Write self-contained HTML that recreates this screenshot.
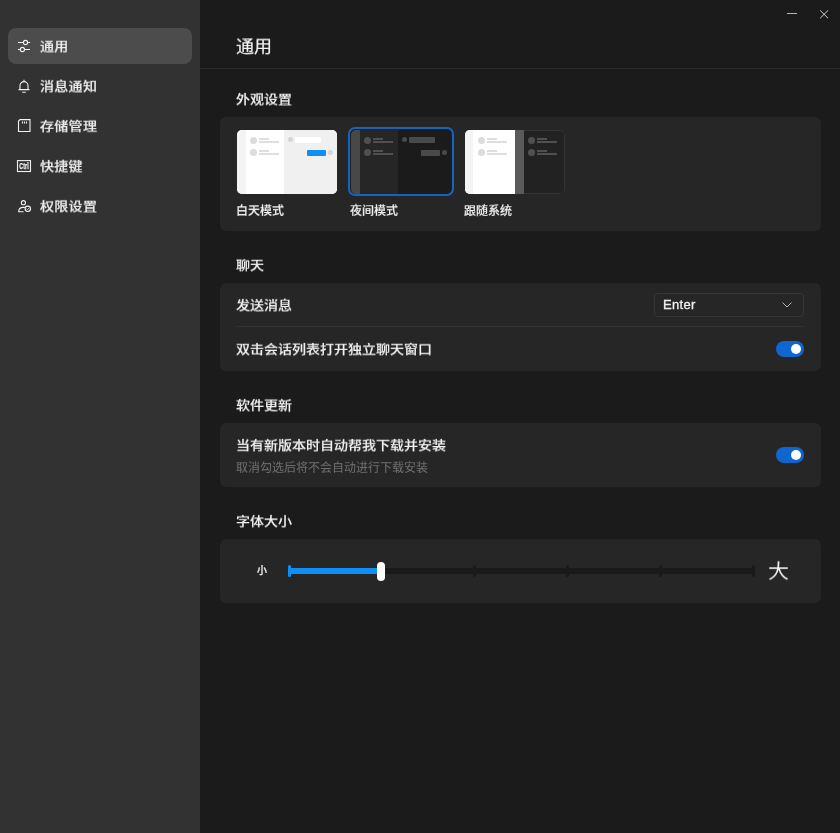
<!DOCTYPE html>
<html lang="zh-CN">
<head>
<meta charset="utf-8">
<title>设置</title>
<style>
*{box-sizing:border-box;margin:0;padding:0}
html,body{width:840px;height:833px;overflow:hidden;background:#1b1b1b}
body{font-family:"Liberation Sans","Noto Sans CJK SC",sans-serif;color:#f0f0f0;position:relative;font-size:14px}
.abs{position:absolute}
.nav .t,h1,.sec,.lbl,.row,.sub,.sel-box,.gt{will-change:transform}
.nav .t,h1,.sec,.lbl,.row,.sub{transform:scaleY(0.9);transform-origin:50% 55%}
.nav .t{display:inline-block;line-height:20px;vertical-align:middle;position:relative;top:-1px}
h1{transform:scaleY(0.96)}
.lbl{transform:scaleY(0.96)}
.sub{transform:scaleY(0.97);margin-top:0.500px}
#side{position:absolute;left:0;top:0;width:200px;height:833px;background:#323232}
.nav{position:absolute;left:8px;width:184px;height:36px;border-radius:8px;line-height:36px;padding-left:32px;font-size:14px;font-weight:500;color:#ececec;white-space:nowrap;-webkit-text-stroke:0.180px #ececec;letter-spacing:0.300px}
.nav.sel{background:#4c4c4c}
.nav svg{position:absolute;left:8px;top:10px;width:16px;height:16px;will-change:transform}
#main{position:absolute;left:200px;top:0;width:640px;height:833px;background:#1b1b1b}
h1{position:absolute;left:36px;top:32.600px;font-size:18px;font-weight:400;line-height:28px;color:#f2f2f2;-webkit-text-stroke:0.2px #f2f2f2}
.hr{position:absolute;left:0;top:68px;width:640px;height:1px;background:#282828}
.sec{position:absolute;left:36px;font-size:14px;line-height:20px;font-weight:500;-webkit-text-stroke:0.12px #f0f0f0;color:#f0f0f0;white-space:nowrap}
.card{position:absolute;left:20px;width:600.500px;background:#262626;border-radius:6px}
.lbl{position:absolute;font-size:12px;line-height:18px;font-weight:500;-webkit-text-stroke:0.12px #f0f0f0;color:#f0f0f0;white-space:nowrap}
.row{position:absolute;left:16px;font-size:14px;line-height:20px;font-weight:500;-webkit-text-stroke:0.12px #f0f0f0;color:#f0f0f0;white-space:nowrap}
.sub{position:absolute;left:16px;font-size:12px;line-height:18px;color:#727272;white-space:nowrap}
.tog{position:absolute;left:556px;width:28px;height:16px;border-radius:8px;background:#0f66d0}
.tog i{position:absolute;right:3px;top:3px;width:10px;height:10px;border-radius:5px;background:#fff}
.sel-box{position:absolute;left:434px;top:10px;width:150px;height:24px;border:1px solid #363636;border-radius:4px;font-size:13px;line-height:22px;padding-left:8px;color:#f0f0f0;-webkit-text-stroke:0.3px #f0f0f0;letter-spacing:0.3px}
.thumb{position:absolute;top:13px;width:100px;height:64px;border-radius:5px;overflow:hidden}
</style>
</head>
<body>
<div id="side">
  <div class="nav sel" style="top:28px">
    <svg viewBox="0 0 16 16" fill="none" stroke="#f2f2f2" stroke-width="1.1"><path d="M2 4.500h5.400M11.600 4.500H14M2 11.500h2.300M8.500 11.500H14"/><circle cx="9.500" cy="4.500" r="2.100"/><circle cx="6.400" cy="11.500" r="2.100"/></svg>
    <span class="t">通用</span></div>
  <div class="nav" style="top:68px">
    <svg viewBox="0 0 16 16" fill="none" stroke="#f2f2f2" stroke-width="1.1"><path d="M8 1.8v1.4M4 11.5V7.6a4 4 0 0 1 8 0v3.9M2.5 11.6h11M6.200 14.300h3.600"/></svg>
    <span class="t">消息通知</span></div>
  <div class="nav" style="top:108px">
    <svg viewBox="0 0 16 16" fill="none" stroke="#f2f2f2" stroke-width="1.1"><path d="M4 1.600H14v11.900H2.500V3.100z"/><path d="M6.500 3.500v2M8.500 3.500v2M10.500 3.500v2"/></svg>
    <span class="t">存储管理</span></div>
  <div class="nav" style="top:148px">
    <svg viewBox="0 0 16 16" fill="none" stroke="#f2f2f2" stroke-width="1.1"><rect x="1.500" y="2.600" width="13" height="10.900"/><text x="3.200" y="11.300" font-size="9" font-family="Liberation Sans,sans-serif" font-weight="700" textLength="9.800" lengthAdjust="spacingAndGlyphs" fill="#f2f2f2" stroke="#f2f2f2" stroke-width="0.250">Ctrl</text></svg>
    <span class="t">快捷键</span></div>
  <div class="nav" style="top:188px">
    <svg viewBox="0 0 16 16" fill="none" stroke="#f2f2f2" stroke-width="1.1"><circle cx="7.4" cy="4.7" r="2.05"/><path d="M7.6 13.7H2.700c0-2.600 1.800-4.300 4.500-4.300h1.600"/><circle cx="11.800" cy="10.800" r="2.700"/><path d="M10.600 10.800l.9.900 1.500-1.600" stroke-width="0.9"/></svg>
    <span class="t">权限设置</span></div>
</div>

<div id="main">
  <svg class="abs" style="left:586px;top:8px;width:12px;height:12px" viewBox="0 0 12 12" stroke="#b4b4b4" stroke-width="1"><path d="M1 5.500h10"/></svg>
  <svg class="abs" style="left:618px;top:8px;width:12px;height:12px" viewBox="0 0 12 12" stroke="#d0d0d0" stroke-width="1"><path d="M2.200 2.400l7.800 7.800M10 2.400l-7.800 7.800"/></svg>
  <h1>通用</h1>
  <div class="hr"></div>

  <div class="sec" style="top:89px">外观设置</div>
  <div class="card" style="top:117px;height:114px">
    <!-- light -->
    <div class="thumb" style="left:17px;background:#fff">
      <div class="abs" style="left:0;top:0;width:9px;height:64px;background:#f4f4f4"></div>
      <div class="abs" style="left:47px;top:0;width:53px;height:64px;background:#f0f0f0"></div>
      <div class="abs" style="left:13px;top:7px;width:7px;height:7px;border-radius:4px;background:#dcdcdc"></div>
      <div class="abs" style="left:22px;top:8px;width:10px;height:2px;background:#dedede"></div>
      <div class="abs" style="left:22px;top:11px;width:20px;height:2px;background:#dedede"></div>
      <div class="abs" style="left:13px;top:19px;width:7px;height:7px;border-radius:4px;background:#dcdcdc"></div>
      <div class="abs" style="left:22px;top:20px;width:10px;height:2px;background:#dedede"></div>
      <div class="abs" style="left:22px;top:23px;width:20px;height:2px;background:#dedede"></div>
      <div class="abs" style="left:51px;top:7px;width:5px;height:5px;border-radius:3px;background:#d4d4d4"></div>
      <div class="abs" style="left:58px;top:7px;width:26px;height:6px;border-radius:1px;background:#fff"></div>
      <div class="abs" style="left:70px;top:20px;width:19px;height:6px;border-radius:1px;background:#0f8ff5"></div>
      <div class="abs" style="left:91px;top:20px;width:5px;height:5px;border-radius:3px;background:#d4d4d4"></div>
    </div>
    <div class="lbl" style="left:16px;top:85px">白天模式</div>
    <!-- dark -->
    <div class="abs" style="left:128px;top:10px;width:106px;height:69px;border:2px solid #1565c0;border-radius:7px;background:#1e1e1e"></div>
    <div class="thumb" style="left:131px;top:13px;background:#262626">
      <div class="abs" style="left:0;top:0;width:9px;height:64px;background:#484848"></div>
      <div class="abs" style="left:47px;top:0;width:53px;height:64px;background:#1b1b1b"></div>
      <div class="abs" style="left:13px;top:7px;width:7px;height:7px;border-radius:4px;background:#505050"></div>
      <div class="abs" style="left:22px;top:8px;width:10px;height:2px;background:#505050"></div>
      <div class="abs" style="left:22px;top:11px;width:20px;height:2px;background:#505050"></div>
      <div class="abs" style="left:13px;top:19px;width:7px;height:7px;border-radius:4px;background:#505050"></div>
      <div class="abs" style="left:22px;top:20px;width:10px;height:2px;background:#505050"></div>
      <div class="abs" style="left:22px;top:23px;width:20px;height:2px;background:#505050"></div>
      <div class="abs" style="left:51px;top:7px;width:5px;height:5px;border-radius:3px;background:#4a4a4a"></div>
      <div class="abs" style="left:58px;top:7px;width:26px;height:6px;border-radius:1px;background:#4a4a4a"></div>
      <div class="abs" style="left:70px;top:20px;width:19px;height:6px;border-radius:1px;background:#4a4a4a"></div>
      <div class="abs" style="left:91px;top:20px;width:5px;height:5px;border-radius:3px;background:#4a4a4a"></div>
    </div>
    <div class="lbl" style="left:130px;top:85px">夜间模式</div>
    <!-- system -->
    <div class="thumb" style="left:245px;background:#222;border:0">
      <div class="abs" style="left:0;top:0;width:50px;height:64px;background:#fff"></div>
      <div class="abs" style="left:0;top:0;width:8px;height:64px;background:#f4f4f4"></div>
      <div class="abs" style="left:50px;top:0;width:9px;height:64px;background:#5a5a5a"></div>
      <div class="abs" style="left:59px;top:0;width:41px;height:64px;border:1px solid #343434;border-left:0;border-radius:0 5px 5px 0"></div>
      <div class="abs" style="left:13px;top:7px;width:7px;height:7px;border-radius:4px;background:#dcdcdc"></div>
      <div class="abs" style="left:22px;top:8px;width:10px;height:2px;background:#dedede"></div>
      <div class="abs" style="left:22px;top:11px;width:20px;height:2px;background:#dedede"></div>
      <div class="abs" style="left:13px;top:19px;width:7px;height:7px;border-radius:4px;background:#dcdcdc"></div>
      <div class="abs" style="left:22px;top:20px;width:10px;height:2px;background:#dedede"></div>
      <div class="abs" style="left:22px;top:23px;width:20px;height:2px;background:#dedede"></div>
      <div class="abs" style="left:63px;top:7px;width:7px;height:7px;border-radius:4px;background:#505050"></div>
      <div class="abs" style="left:72px;top:8px;width:10px;height:2px;background:#505050"></div>
      <div class="abs" style="left:72px;top:11px;width:20px;height:2px;background:#505050"></div>
      <div class="abs" style="left:63px;top:19px;width:7px;height:7px;border-radius:4px;background:#505050"></div>
      <div class="abs" style="left:72px;top:20px;width:10px;height:2px;background:#505050"></div>
      <div class="abs" style="left:72px;top:23px;width:20px;height:2px;background:#505050"></div>
    </div>
    <div class="lbl" style="left:244px;top:85px">跟随系统</div>
  </div>

  <div class="sec" style="top:255px">聊天</div>
  <div class="card" style="top:283px;height:88px">
    <div class="row" style="top:12px">发送消息</div>
    <div class="sel-box">Enter
      <svg class="abs" style="left:126px;top:6px;width:12px;height:10px" viewBox="0 0 12 10" fill="none" stroke="#b4b4b4" stroke-width="1"><path d="M1.500 2.500L6 7l4.500-4.500"/></svg>
    </div>
    <div class="abs" style="left:16px;top:43px;width:568px;height:1px;background:#313131"></div>
    <div class="row" style="top:56px">双击会话列表打开独立聊天窗口</div>
    <div class="tog" style="top:58px"><i></i></div>
  </div>

  <div class="sec" style="top:395px">软件更新</div>
  <div class="card" style="top:423px;height:64px">
    <div class="row" style="top:12px">当有新版本时自动帮我下载并安装</div>
    <div class="sub" style="top:35px">取消勾选后将不会自动进行下载安装</div>
    <div class="tog" style="top:24px"><i></i></div>
  </div>

  <div class="sec" style="top:511px">字体大小</div>
  <div class="card" style="top:539px;height:64px">
    <div class="abs gt" style="left:37px;top:24px;font-size:10px;line-height:16px;font-weight:500;color:#e8e8e8;-webkit-text-stroke:0.25px #e8e8e8">小</div>
    <div class="abs" style="left:68px;top:29px;width:466px;height:6px;background:#1a1a1a"></div>
    <div class="abs" style="left:68px;top:29px;width:93px;height:6px;background:#0f8ff5"></div>
    <div class="abs" style="left:67.500px;top:26px;width:3.500px;height:12px;border-radius:1.500px;background:#0f8ff5"></div>
    <div class="abs" style="left:253px;top:26px;width:3px;height:12px;border-radius:1.5px;background:#1a1a1a"></div>
    <div class="abs" style="left:346px;top:26px;width:3px;height:12px;border-radius:1.5px;background:#1a1a1a"></div>
    <div class="abs" style="left:439px;top:26px;width:3px;height:12px;border-radius:1.5px;background:#1a1a1a"></div>
    <div class="abs" style="left:532px;top:26px;width:3px;height:12px;border-radius:1.5px;background:#1a1a1a"></div>
    <div class="abs" style="left:157px;top:22.500px;width:8px;height:19px;border-radius:4px;background:#fff"></div>
    <div class="abs gt" style="left:547.500px;top:17.700px;font-size:21px;line-height:28px;color:#f0f0f0;transform:scaleY(0.93)">大</div>
  </div>
</div>
</body>
</html>
